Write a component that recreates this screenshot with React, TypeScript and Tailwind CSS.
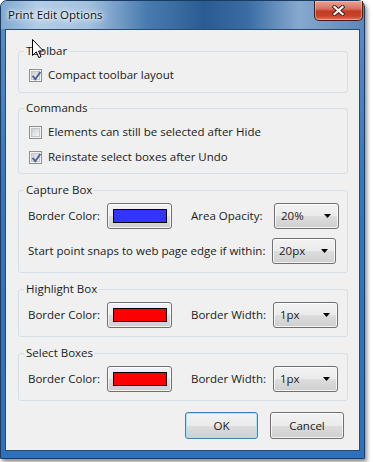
import type { ReactNode } from "react";

function Checkbox({ checked }: { checked: boolean }) {
  return (
    <span className="relative flex h-[13px] w-[13px] shrink-0 items-center justify-center border border-[#8e8f8f] bg-[#f4f4f4]">
      <span className="h-[9px] w-[9px] border border-[#c3c7cc] bg-[linear-gradient(135deg,#c9cdd3,#f7f7f7)]" />
      {checked && (
        <svg className="absolute left-[1px] top-[1px]" width="11" height="11" viewBox="0 0 11 11">
          <path d="M2.2 5.6 L4.3 8.2 L8.8 1.8" fill="none" stroke="#4a5f97" strokeWidth="1.9" strokeLinecap="square" />
        </svg>
      )}
    </span>
  );
}

function CheckRow({ checked, children }: { checked: boolean; children: ReactNode }) {
  return (
    <label className="flex h-[16px] items-center gap-[6px] pl-[10px]">
      <Checkbox checked={checked} />
      <span>{children}</span>
    </label>
  );
}

function Group({ title, className, children }: { title: string; className: string; children: ReactNode }) {
  return (
    <fieldset className={`ml-[12px] w-[330px] rounded-[3px] border border-[#d5dfe5] ${className}`}>
      <legend className="ml-[5px] px-[2px] leading-[16px]">{title}</legend>
      {children}
    </fieldset>
  );
}

const btn =
  "rounded-[3px] border border-[#707070] bg-[linear-gradient(to_bottom,#f2f2f2_0%,#ebebeb_50%,#dddddd_51%,#cfcfcf_100%)] shadow-[inset_0_0_0_1px_rgba(255,255,255,0.75)]";

function ColorButton({ color }: { color: string }) {
  return (
    <div className={`flex h-[26px] w-[65px] shrink-0 items-center justify-center ${btn}`}>
      <div className="h-[14px] w-[54px] border border-black" style={{ backgroundColor: color }} />
    </div>
  );
}

function Select({ value, width }: { value: string; width: string }) {
  return (
    <div className={`flex h-[26px] shrink-0 items-center justify-between pl-[6px] pr-[7px] ${width} ${btn}`}>
      <span>{value}</span>
      <svg width="7" height="4" viewBox="0 0 7 4">
        <path d="M0 0 H7 L3.5 4 Z" fill="#000" />
      </svg>
    </div>
  );
}

export default function App() {
  return (
    <div className="relative h-[462px] w-[373px] whitespace-nowrap bg-white font-['Open_Sans','Noto_Sans',sans-serif] text-[11.5px] text-[#1a1a1a]">
      <div className="flex h-[459px] w-[365px] flex-col rounded-t-[7px] border border-[#1b3b61] bg-[linear-gradient(to_bottom,#5d8fc4,#3576bd_40%,#2e70bb)] shadow-[2px_3px_4px_rgba(0,0,0,0.45)]">
        {/* Title bar */}
        <div className="flex h-[28px] items-start justify-between rounded-t-[6px] bg-[linear-gradient(90deg,#7ea6cf_0%,#b3cde6_10%,#a3c1df_24%,#4a7bb0_40%,#2a5c93_56%,#3a6da4_68%,#86a9ce_82%,#5b87b8_100%)] pl-[7px] pr-[1px]">
          <span className="mt-[6px] text-[11.5px] leading-[16px] text-[#111] [text-shadow:0_0_10px_#fff,0_0_6px_#fff,0_0_3px_#fff]">
            Print Edit Options
          </span>
          <div className="flex h-[20px] w-[49px] items-center justify-center rounded-b-[5px] border border-t-0 border-[#4a1c16] bg-[linear-gradient(to_bottom,#e6a596_0%,#d8735f_40%,#c23a22_55%,#c8462c_80%,#de7a5c_100%)] shadow-[inset_0_0_0_1px_rgba(255,210,200,0.45)]">
            <svg width="13" height="11" viewBox="0 0 13 11">
              <path d="M2.5 2 L10.5 9 M10.5 2 L2.5 9" stroke="#4a1c16" strokeWidth="4" strokeLinecap="square" />
              <path d="M2.5 2 L10.5 9 M10.5 2 L2.5 9" stroke="#fff" strokeWidth="2.2" strokeLinecap="square" />
            </svg>
          </div>
        </div>

        {/* Client area */}
        <div className="ml-[4px] flex h-[422px] w-[355px] flex-col border border-[#2a4a70] bg-[#f0f0f0] pt-[13px]">
          <Group title="Toolbar" className="mb-[7px] pb-[9px]">
            <div className="mt-[8px]">
              <CheckRow checked>Compact toolbar layout</CheckRow>
            </div>
          </Group>

          <Group title="Commands" className="mb-[8px] pb-[8px]">
            <div className="mt-[8px] flex flex-col gap-[9px]">
              <CheckRow checked={false}>Elements can still be selected after Hide</CheckRow>
              <CheckRow checked>Reinstate select boxes after Undo</CheckRow>
            </div>
          </Group>

          <Group title="Capture Box" className="mb-[8px] pb-[8px]">
            <div className="mt-[5px] flex flex-col gap-[9px] pl-[9px]">
              <div className="flex items-center">
                <span className="w-[79px]">Border Color:</span>
                <ColorButton color="#3434ff" />
                <span className="ml-[19px] w-[83px]">Area Opacity:</span>
                <Select value="20%" width="w-[65px]" />
              </div>
              <div className="flex items-center">
                <span className="w-[244px]">Start point snaps to web page edge if within:</span>
                <Select value="20px" width="w-[64px]" />
              </div>
            </div>
          </Group>

          <Group title="Highlight Box" className="mb-[8px] pb-[8px]">
            <div className="mt-[5px] flex items-center pl-[9px]">
              <span className="w-[79px]">Border Color:</span>
              <ColorButton color="#ff0000" />
              <span className="ml-[19px] w-[82px]">Border Width:</span>
              <Select value="1px" width="w-[65px]" />
            </div>
          </Group>

          <Group title="Select Boxes" className="pb-[8px]">
            <div className="mt-[5px] flex items-center pl-[9px]">
              <span className="w-[79px]">Border Color:</span>
              <ColorButton color="#ff0000" />
              <span className="ml-[19px] w-[82px]">Border Width:</span>
              <Select value="1px" width="w-[65px]" />
            </div>
          </Group>

          <div className="mt-[11px] flex justify-end gap-[12px] pr-[15px]">
            <button className="h-[27px] w-[73px] rounded-[3px] border border-[#3c7fb1] bg-[linear-gradient(to_bottom,#f2f2f2_0%,#ebebeb_50%,#dddddd_51%,#cfcfcf_100%)] shadow-[inset_0_0_0_1px_#a8e3f8]">
              OK
            </button>
            <button className={`h-[27px] w-[74px] ${btn}`}>Cancel</button>
          </div>
        </div>
      </div>

      {/* Mouse pointer */}
      <svg className="absolute left-[32px] top-[39px]" width="13" height="20" viewBox="0 0 13 20">
        <path d="M0.5 0.5 V16.5 L4.3 12.8 L6.8 18.6 L9 17.6 L6.6 12 H11.5 Z" fill="#fff" stroke="#000" strokeWidth="1" strokeLinejoin="miter" />
      </svg>
    </div>
  );
}
